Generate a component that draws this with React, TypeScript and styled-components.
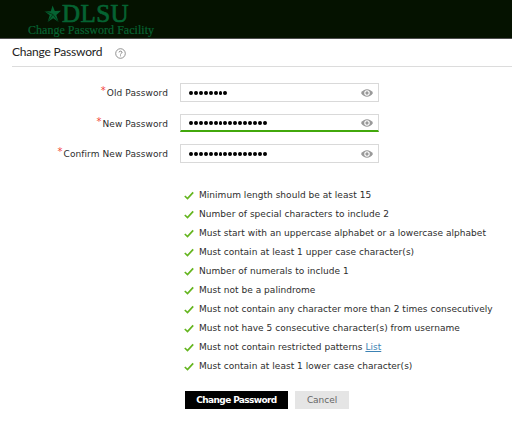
import React from "react";
import styled, { createGlobalStyle } from "styled-components";

const Global = createGlobalStyle`
  * { box-sizing: border-box; }
  body { margin: 0; background: #fff; font-family: "DejaVu Sans", Verdana, sans-serif; color: #2d2d2d; }
`;

const Page = styled.div`
  width: 512px;
  height: 434px;
  overflow: hidden;
  background: #fff;
`;

const Header = styled.header`
  height: 39px;
  padding: 3px 0 0 28px;
  background: #051200;
  border-bottom: 1px solid #4d4d4d;
  color: #056332;
  font-family: "Liberation Serif", serif;
`;

const Brand = styled.div`
  display: flex;
  height: 20px;
  padding-left: 16px;
`;

const Star = styled.svg`
  width: 18px;
  height: 18px;
  margin-top: 1px;
`;

const BrandName = styled.span`
  font-size: 25px;
  font-weight: 400;
  line-height: 22px;
  letter-spacing: 0.4px;
  -webkit-text-stroke: 0.7px #056332;
`;

const Tagline = styled.div`
  font-size: 12px;
  line-height: 14px;
  letter-spacing: 0.03px;
  white-space: nowrap;
  -webkit-text-stroke: 0.2px #056332;
`;

const TitleBar = styled.div`
  display: flex;
  height: 28px;
  margin-left: 12px;
  border-bottom: 1px solid #dcdcdc;
`;

const Title = styled.h1`
  width: 103px;
  margin: 0;
  font: 400 12px/26px Lato, sans-serif;
  letter-spacing: -0.2px;
  color: #222;
`;

const Help = styled.svg`
  width: 11px;
  height: 11px;
  margin-top: 9px;
`;

const Fields = styled.div`
  display: flex;
  flex-direction: column;
  gap: 11px;
  padding-top: 16px;
`;

const Field = styled.div`
  display: flex;
  height: 19.5px;
`;

const Label = styled.label`
  display: flex;
  justify-content: flex-end;
  width: 168px;
  margin-right: 12px;
  font-size: 9px;
  line-height: 21px;
  letter-spacing: 0.08px;
  white-space: nowrap;
`;

const Required = styled.span`
  margin-right: 1px;
  font-size: 10px;
  line-height: 16px;
  color: #f2453a;
`;

const InputBox = styled.div<{ $active?: boolean }>`
  display: flex;
  align-items: center;
  justify-content: space-between;
  width: 199px;
  height: 19px;
  padding: 0 5px 0 8px;
  border: 1px solid #d9d9d9;
  ${(p) => p.$active && "height: 18px; border-bottom: 2px solid #42a80c; padding-top: 1px;"}
`;

const Dots = styled.span`
  display: flex;
  gap: 1px;
`;

const Dot = styled.i`
  width: 3.93px;
  height: 4px;
  border-radius: 50%;
  background: #000;
`;

const Eye = styled.svg`
  width: 12px;
  height: 8px;
`;

const Rules = styled.ul`
  display: flex;
  flex-direction: column;
  margin: 22px 0 0 184px;
  padding: 0;
  list-style: none;
`;

const Rule = styled.li`
  display: flex;
  align-items: center;
  height: 19px;
  font-size: 9px;
  letter-spacing: 0.035px;
  white-space: pre;
`;

const Check = styled.svg`
  width: 10px;
  height: 9px;
  margin-right: 5px;
`;

const ListLink = styled.a`
  color: #3c82b4;
  text-decoration: underline;
`;

const Actions = styled.div`
  display: flex;
  gap: 7px;
  margin: 15px 0 0 185px;
`;

const Button = styled.button<{ $primary?: boolean }>`
  width: ${(p) => (p.$primary ? 103 : 54)}px;
  height: 18px;
  padding: 0;
  border: 0;
  font: ${(p) => (p.$primary ? 700 : 400)} 9px/18px "DejaVu Sans", sans-serif;
  letter-spacing: ${(p) => (p.$primary ? -0.62 : -0.05)}px;
  white-space: nowrap;
  color: ${(p) => (p.$primary ? "#fff" : "#666")};
  background: ${(p) => (p.$primary ? "#000" : "#e5e5e5")};
`;

const fields = [
  { label: "Old Password", count: 8 },
  { label: "New Password", count: 16, active: true },
  { label: "Confirm New Password", count: 16 },
];

const rules = [
  { text: "Minimum length should be at least 15" },
  { text: "Number of special characters to include 2" },
  { text: "Must start with an uppercase alphabet or a lowercase alphabet" },
  { text: "Must contain at least 1 upper case character(s)" },
  { text: "Number of numerals to include 1" },
  { text: "Must not be a palindrome" },
  { text: "Must not contain any character more than 2 times consecutively" },
  { text: "Must not have 5 consecutive character(s) from username" },
  { text: "Must not contain restricted patterns ", link: "List" },
  { text: "Must contain at least 1 lower case character(s)" },
];

export default function App() {
  return (
    <Page>
      <Global />
      <Header>
        <Brand>
          <Star viewBox="0 0 18 18">
            <path d="M8.6 1.5 10.8 7 17 6.8 12.3 11 14.6 18 9.2 14.2 3.6 18 5.7 11.2 .5 7.2 6.8 7.2Z" fill="#056332" />
            <path d="M9 10.5 3.6 18M1 7.2 9 10.5M9 10.5 14.6 18" fill="none" stroke="#051200" strokeWidth=".5" />
          </Star>
          <BrandName>DLSU</BrandName>
        </Brand>
        <Tagline>Change Password Facility</Tagline>
      </Header>
      <TitleBar>
        <Title>Change Password</Title>
        <Help viewBox="0 0 11 11" fill="none" stroke="#777">
          <circle cx="5.5" cy="5.5" r="4.8" strokeWidth=".8" />
          <path d="M4 4.4C4 2.7 7 2.7 7 4.4 7 5.4 5.5 5.3 5.5 6.5M5.5 7.4V8.3" strokeWidth=".9" />
        </Help>
      </TitleBar>
      <Fields>
        {fields.map((f) => (
          <Field key={f.label}>
            <Label>
              <Required>*</Required>
              {f.label}
            </Label>
            <InputBox $active={f.active}>
              <Dots>
                {Array.from({ length: f.count }, (_, i) => (
                  <Dot key={i} />
                ))}
              </Dots>
              <Eye viewBox="0 0 12 8">
                <path d="M0 4C3-1 9-1 12 4 9 9 3 9 0 4Z" fill="#999" />
                <circle cx="6" cy="4" r="2.2" fill="#999" stroke="#fff" strokeWidth="1.1" />
              </Eye>
            </InputBox>
          </Field>
        ))}
      </Fields>
      <Rules>
        {rules.map((r) => (
          <Rule key={r.text}>
            <Check viewBox="0 0 10 9">
              <path d="M.8 5 3.5 7.5 9.2 1.3" fill="none" stroke="#64b51e" strokeWidth="1.7" />
            </Check>
            <span>
              {r.text}
              {r.link && <ListLink>{r.link}</ListLink>}
            </span>
          </Rule>
        ))}
      </Rules>
      <Actions>
        <Button $primary>Change Password</Button>
        <Button>Cancel</Button>
      </Actions>
    </Page>
  );
}
